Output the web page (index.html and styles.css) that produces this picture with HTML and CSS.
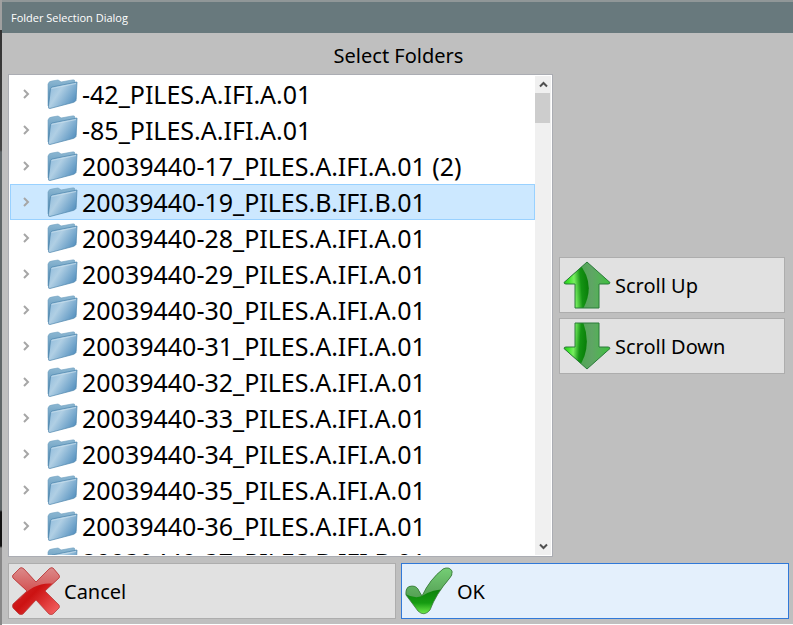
FILE: index.html
```
<!DOCTYPE html>
<html lang="en">
<head>
    <meta charset="UTF-8">
    <meta name="viewport" content="width=device-width, initial-scale=1.0">
    <title>Folder Selection Dialog</title>
    <link rel="stylesheet" href="styles.css">
</head>
<body>
    <svg class="defs" width="0" height="0" aria-hidden="true">
        <defs>
            <linearGradient id="folder-front" x1="0" y1="0.2" x2="1" y2="0.8">
                <stop offset="0" stop-color="#8fbbdb"/>
                <stop offset="0.35" stop-color="#b0cfe4"/>
                <stop offset="1" stop-color="#4b8abb"/>
            </linearGradient>
            <linearGradient id="folder-back" x1="0" y1="0" x2="0" y2="1">
                <stop offset="0" stop-color="#8db8d3"/>
                <stop offset="1" stop-color="#4580aa"/>
            </linearGradient>
            <linearGradient id="arrow-light" x1="0" y1="0" x2="1" y2="0">
                <stop offset="0" stop-color="#3aa83a"/>
                <stop offset="0.6" stop-color="#5fa565"/>
                <stop offset="0.75" stop-color="#55b058"/>
                <stop offset="1" stop-color="#38c238"/>
            </linearGradient>
            <linearGradient id="arrow-dark" x1="0" y1="0.6" x2="1" y2="0.45">
                <stop offset="0" stop-color="#22b81c"/>
                <stop offset="0.25" stop-color="#3fe52c"/>
                <stop offset="0.45" stop-color="#78ee60"/>
                <stop offset="0.7" stop-color="#149414"/>
                <stop offset="1" stop-color="#087c08"/>
            </linearGradient>
            <linearGradient id="cross-fill" x1="0" y1="0" x2="1" y2="1">
                <stop offset="0" stop-color="#d83a3a"/>
                <stop offset="0.5" stop-color="#cc1212"/>
                <stop offset="1" stop-color="#f86a6a"/>
            </linearGradient>
            <linearGradient id="cross-shine" x1="0" y1="0" x2="0" y2="1">
                <stop offset="0" stop-color="#dc8c8c"/>
                <stop offset="1" stop-color="#d04040"/>
            </linearGradient>
            <linearGradient id="check-fill" x1="0" y1="0" x2="0" y2="1">
                <stop offset="0.4" stop-color="#0b7a0b"/>
                <stop offset="0.75" stop-color="#169c12"/>
                <stop offset="1" stop-color="#7cf552"/>
            </linearGradient>
            <linearGradient id="check-shine" x1="0" y1="0" x2="0" y2="1">
                <stop offset="0" stop-color="#76cf76"/>
                <stop offset="1" stop-color="#55a055"/>
            </linearGradient>
            <clipPath id="arrow-clip"><path d="M24 1 47 21.500Q47 23 45 23H36V47H12V23H3Q1 23 1 21.500Z"/></clipPath>
            <clipPath id="cross-clip"><path d="M8 1Q10 0 12 2L24 15 37 2Q39 0 41 1L47 8Q48 10 47 11L33 24 47 38Q48 40 47 41L41 47Q39 48 37 47L24 33 11 47Q9 48 7 47L1 41Q0 39 1 37L15 24 1 11Q0 9 1 8Z"/></clipPath>
            <clipPath id="check-clip"><path d="M1 28Q0 19 7 19Q12 19 14 24L17 29Q25 12 38 2Q44-1 47 4Q48 8 44 12Q31 27 25 43Q19 50 13 44Z"/></clipPath>
        </defs>
        <symbol id="folder" viewBox="0 0 32 30">
            <path d="M1 27V5Q2 2 5 2L11 1Q13 2 14 3L25 1Q28 0 28 3L29 20Z" fill="url(#folder-back)" stroke="#6f9fc0" stroke-width="0.600"/>
            <path d="M5 8 30 3 29 21.500Q28 23 26 23.500L3 29.500Q1 30 1.500 27L3.500 10Q4 8.300 5 8Z" fill="url(#folder-front)" stroke="#4f86ae" stroke-width="0.700"/>
            <path d="M4.500 9.500 29 4.500" fill="none" stroke="#c7ddeb" stroke-width="0.800"/>
        </symbol>
        <symbol id="chevron" viewBox="0 0 8 10">
            <path d="M2 1 6 5 2 9" fill="none" stroke="currentColor" stroke-width="2"/>
        </symbol>
        <symbol id="arrow" viewBox="0 0 48 48">
            <g clip-path="url(#arrow-clip)">
                <rect width="48" height="48" fill="url(#arrow-light)"/>
                <path d="M0 0H14Q34 22 20 48H0Z" fill="url(#arrow-dark)"/>
            </g>
            <path d="M24 1 47 21.500Q47 23 45 23H36V47H12V23H3Q1 23 1 21.500Z" fill="none" stroke="#2b7a3a"/>
        </symbol>
        <symbol id="arrow-flipped" viewBox="0 0 48 48">
            <g transform="matrix(1 0 0 -1 0 48)">
                <g clip-path="url(#arrow-clip)">
                    <rect width="48" height="48" fill="url(#arrow-light)"/>
                    <path d="M0 0H14Q30 22 20 48H0Z" fill="url(#arrow-dark)"/>
                </g>
                <path d="M24 1 47 21.500Q47 23 45 23H36V47H12V23H3Q1 23 1 21.500Z" fill="none" stroke="#2b7a3a"/>
            </g>
        </symbol>
    </svg>

    <div class="dialog">
        <header class="titlebar">Folder Selection Dialog</header>
        <main class="content">
            <h1 class="heading">Select Folders</h1>
            <div class="middle">
                <div class="list-box">
                    <ul class="folders" id="folders"></ul>
                    <div class="scrollbar">
                        <button type="button" class="scroll-arrow" aria-label="Line up">
                            <svg width="9" height="7" viewBox="0 0 9 7"><path d="M1 5.500 4.500 2 8 5.500" fill="none" stroke="#505050" stroke-width="2"/></svg>
                        </button>
                        <div class="thumb"></div>
                        <button type="button" class="scroll-arrow last" aria-label="Line down">
                            <svg width="9" height="7" viewBox="0 0 9 7"><path d="M1 1.500 4.500 5 8 1.500" fill="none" stroke="#505050" stroke-width="2"/></svg>
                        </button>
                    </div>
                </div>
                <div class="side">
                    <button type="button" class="btn" id="scroll-up">
                        <svg class="btn-icon"><use href="#arrow"/></svg>Scroll Up
                    </button>
                    <button type="button" class="btn" id="scroll-down">
                        <svg class="btn-icon"><use href="#arrow-flipped"/></svg>Scroll Down
                    </button>
                </div>
            </div>
            <div class="actions">
                <button type="button" class="btn">
                    <svg class="btn-icon" viewBox="0 0 48 48">
                        <g clip-path="url(#cross-clip)">
                            <rect width="48" height="48" fill="url(#cross-fill)"/>
                            <path d="M0 0H48V18Q24 12 8 32L0 30Z" fill="url(#cross-shine)"/>
                        </g>
                        <path d="M8 1Q10 0 12 2L24 15 37 2Q39 0 41 1L47 8Q48 10 47 11L33 24 47 38Q48 40 47 41L41 47Q39 48 37 47L24 33 11 47Q9 48 7 47L1 41Q0 39 1 37L15 24 1 11Q0 9 1 8Z" fill="none" stroke="#b83a3a" stroke-width="0.800"/>
                    </svg>Cancel
                </button>
                <button type="button" class="btn default">
                    <svg class="btn-icon" viewBox="0 0 48 48">
                        <g clip-path="url(#check-clip)">
                            <rect width="48" height="48" fill="url(#check-fill)"/>
                            <path d="M0 0H48V22Q28 21 17 29Q10 32 0 27Z" fill="url(#check-shine)"/>
                        </g>
                        <path d="M1 28Q0 19 7 19Q12 19 14 24L17 29Q25 12 38 2Q44-1 47 4Q48 8 44 12Q31 27 25 43Q19 50 13 44Z" fill="none" stroke="#3c7a3c" stroke-width="0.800"/>
                    </svg>OK
                </button>
            </div>
        </main>
    </div>
    <script src="script.js"></script>
</body>
</html>
```
FILE: styles.css
```
* {
    box-sizing: border-box;
}
body {
    margin: 0;
    height: 100vh;
    background: linear-gradient(#a0a0a0 30px, #333 30px, #444 150px, #5f6668 152px, #5f6668 510px, #111 512px, #111 546px, #888 548px);
    font-family: "Noto Sans", Tahoma, sans-serif;
    color: #000;
    overflow: hidden;
}
.defs {
    position: absolute;
}
.dialog {
    display: flex;
    flex-direction: column;
    height: 100vh;
    margin-left: 2px;
    border-top: 2px solid #909798;
    border-bottom: 1px solid #fff;
    background-color: #bfbfbf;
}
.titlebar {
    flex: none;
    height: 31px;
    padding-left: 9px;
    background-color: #68797d;
    color: #fff;
    font-family: "Open Sans", "Segoe UI", sans-serif;
    font-size: 11px;
    line-height: 31px;
}
.content {
    display: flex;
    flex-direction: column;
    flex: 1;
    min-height: 0;
    padding: 5px 4px 5px 6px;
}
.heading {
    margin: 0;
    font-size: 20px;
    font-weight: normal;
    line-height: 36px;
    text-align: center;
}
.middle {
    display: flex;
    flex: 1;
    gap: 6px;
    min-height: 0;
    padding-right: 4px;
}
.list-box {
    display: flex;
    flex: 1;
    padding: 1px;
    border: 1px solid #abadb3;
    background-color: #fff;
}
.folders {
    flex: 1;
    margin: 0;
    padding: 0;
    overflow: hidden;
    list-style: none;
}
.folder {
    display: flex;
    align-items: center;
    height: 36px;
    border: 1px solid transparent;
    font-size: 25px;
    line-height: 34px;
    white-space: nowrap;
}
.folder.selected {
    background-color: #cce8ff;
    border-color: #99d1ff;
}
.expander {
    display: flex;
    padding: 0 11px;
    border: none;
    background: none;
    color: #a6a6a6;
}
.expander svg {
    width: 8px;
    height: 10px;
}
.folder-icon {
    width: 32px;
    height: 30px;
    margin: 0 3px 0 6px;
}
.scrollbar {
    display: flex;
    flex-direction: column;
    width: 16px;
    background-color: #f0f0f0;
}
.scroll-arrow {
    display: flex;
    align-items: center;
    justify-content: center;
    height: 17px;
    padding: 0;
    border: none;
    background: none;
}
.scroll-arrow.last {
    margin-top: auto;
}
.thumb {
    height: 30px;
    margin-right: 1px;
    background-color: #cdcdcd;
}
.side {
    display: flex;
    flex-direction: column;
    justify-content: center;
    gap: 5px;
    width: 226px;
}
.btn {
    display: flex;
    align-items: center;
    gap: 4px;
    height: 56px;
    padding: 0 3px;
    border: 1px solid #adadad;
    background-color: #e1e1e1;
    color: #000;
    font-family: inherit;
    font-size: 20px;
}
.btn.default {
    border-color: #3079d8;
    background-color: #e4f0fc;
}
.btn-icon {
    flex: none;
    width: 48px;
    height: 48px;
}
.actions {
    display: grid;
    grid-template-columns: 1fr 1fr;
    gap: 5px;
    margin-top: 6px;
}
```
FILE: script.js
```
var folders = [
    '-42_PILES.A.IFI.A.01',
    '-85_PILES.A.IFI.A.01',
    '20039440-17_PILES.A.IFI.A.01 (2)',
    '20039440-19_PILES.B.IFI.B.01',
    '20039440-28_PILES.A.IFI.A.01',
    '20039440-29_PILES.A.IFI.A.01',
    '20039440-30_PILES.A.IFI.A.01',
    '20039440-31_PILES.A.IFI.A.01',
    '20039440-32_PILES.A.IFI.A.01',
    '20039440-33_PILES.A.IFI.A.01',
    '20039440-34_PILES.A.IFI.A.01',
    '20039440-35_PILES.A.IFI.A.01',
    '20039440-36_PILES.A.IFI.A.01',
    '20039440-37_PILES.B.IFI.B.01'
];
var selected = 3;
var list = document.getElementById('folders');

list.innerHTML = folders.map(function(name, i) {
    return '<li class="folder' + (i === selected ? ' selected' : '') + '">' +
        '<button type="button" class="expander" aria-label="Expand ' + name + '"><svg><use href="#chevron"/></svg></button>' +
        '<svg class="folder-icon"><use href="#folder"/></svg>' +
        '<span>' + name + '</span></li>';
}).join('');

document.getElementById('scroll-up').addEventListener('click', function() {
    list.scrollTop -= 36;
});
document.getElementById('scroll-down').addEventListener('click', function() {
    list.scrollTop += 36;
});
```
